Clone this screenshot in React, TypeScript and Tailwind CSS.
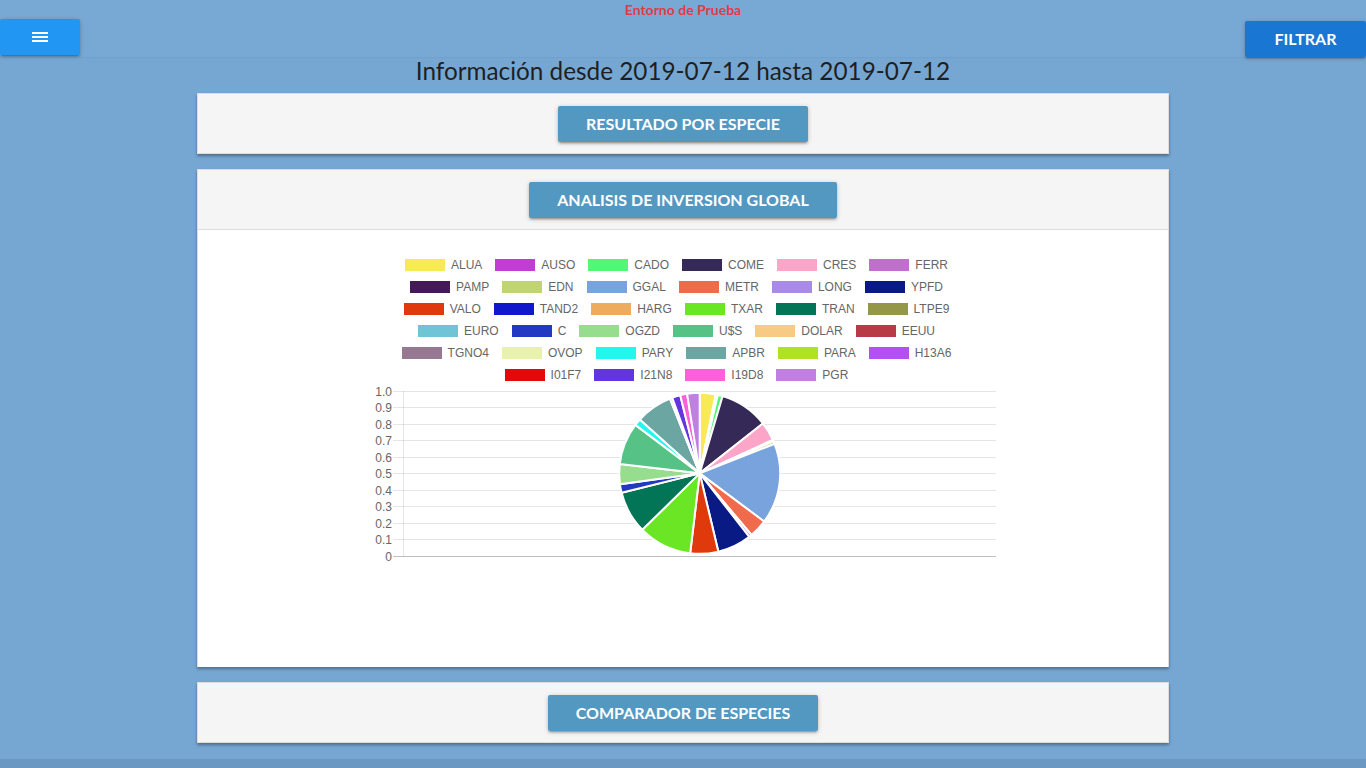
import React from "react";

type Item = { name: string; color: string; deg: number };

// degrees of the pie, clockwise from the top, in legend order
const items: Item[] = [
  { name: "ALUA", color: "#f7ea55", deg: 11.5 },
  { name: "AUSO", color: "#c53bd6", deg: 1.5 },
  { name: "CADO", color: "#52f774", deg: 3.5 },
  { name: "COME", color: "#352957", deg: 35.2 },
  { name: "CRES", color: "#fba6c9", deg: 13.8 },
  { name: "FERR", color: "#c070cc", deg: 0.5 },
  { name: "PAMP", color: "#431a57", deg: 0.5 },
  { name: "EDN", color: "#c0d474", deg: 2 },
  { name: "GGAL", color: "#78a3dc", deg: 58.3 },
  { name: "METR", color: "#ef6b4c", deg: 13.2 },
  { name: "LONG", color: "#a98ae6", deg: 2 },
  { name: "YPFD", color: "#0a1a85", deg: 24.6 },
  { name: "VALO", color: "#e03a0c", deg: 20.2 },
  { name: "TAND2", color: "#1018cc", deg: 0 },
  { name: "HARG", color: "#eeab5c", deg: 0 },
  { name: "TXAR", color: "#6ae624", deg: 38.7 },
  { name: "TRAN", color: "#017556", deg: 30.5 },
  { name: "LTPE9", color: "#959748", deg: 0 },
  { name: "EURO", color: "#6fc4d6", deg: 0 },
  { name: "C", color: "#2339c1", deg: 6.2 },
  { name: "OGZD", color: "#97dd8e", deg: 14.5 },
  { name: "U$S", color: "#56c286", deg: 30.3 },
  { name: "DOLAR", color: "#f8cb85", deg: 0 },
  { name: "EEUU", color: "#b73a47", deg: 0 },
  { name: "TGNO4", color: "#967892", deg: 0 },
  { name: "OVOP", color: "#e8f2ad", deg: 0 },
  { name: "PARY", color: "#22f6ee", deg: 5 },
  { name: "APBR", color: "#6ca6a2", deg: 26.3 },
  { name: "PARA", color: "#afe223", deg: 1.7 },
  { name: "H13A6", color: "#b44ff0", deg: 0 },
  { name: "I01F7", color: "#e5070c", deg: 0 },
  { name: "I21N8", color: "#6235e0", deg: 6 },
  { name: "I19D8", color: "#ff5fd8", deg: 5 },
  { name: "PGR", color: "#c080e0", deg: 9 },
];

const rows = [
  ["ALUA", "AUSO", "CADO", "COME", "CRES", "FERR"],
  ["PAMP", "EDN", "GGAL", "METR", "LONG", "YPFD"],
  ["VALO", "TAND2", "HARG", "TXAR", "TRAN", "LTPE9"],
  ["EURO", "C", "OGZD", "U$S", "DOLAR", "EEUU"],
  ["TGNO4", "OVOP", "PARY", "APBR", "PARA", "H13A6"],
  ["I01F7", "I21N8", "I19D8", "PGR"],
];

const byName = (n: string) => items.find((i) => i.name === n)!;

const Legend = () => (
  <div className="flex flex-col">
    {rows.map((row, r) => (
      <div key={r} className="h-[22px] flex items-center justify-center">
        {row.map((n) => (
          <div key={n} className="flex items-center mr-[13px]">
            <span className="block w-[40px] h-[12px]" style={{ background: byName(n).color }} />
            <span className="ml-[6px] text-[12px] leading-[14px] text-[#666]">{n}</span>
          </div>
        ))}
      </div>
    ))}
  </div>
);

const PieChart = () => {
  const top = 5;
  const step = 16.47;
  const bottom = top + step * 10;
  const cx = 329.7;
  const cy = (top + bottom) / 2;
  const r = 80.5;
  const pt = (a: number) => {
    const t = (a * Math.PI) / 180;
    return [cx + r * Math.sin(t), cy - r * Math.cos(t)];
  };
  let acc = 0;
  const slices = items
    .filter((i) => i.deg > 0)
    .map((i) => {
      const a0 = acc;
      acc += i.deg;
      const [x0, y0] = pt(a0);
      const [x1, y1] = pt(acc);
      const large = i.deg > 180 ? 1 : 0;
      return (
        <path
          key={i.name}
          d={`M${cx} ${cy} L${x0} ${y0} A${r} ${r} 0 ${large} 1 ${x1} ${y1} Z`}
          fill={i.color}
          stroke="#fff"
          strokeWidth={2}
          strokeLinejoin="round"
        />
      );
    });
  const labels = ["1.0", "0.9", "0.8", "0.7", "0.6", "0.5", "0.4", "0.3", "0.2", "0.1", "0"];
  return (
    <svg width="626" height="182" className="block mx-auto">
      {labels.map((l, i) => {
        const y = Math.round(top + i * step) + 0.5;
        return (
          <g key={l}>
            <line x1="23" x2="626" y1={y} y2={y} stroke={i === 10 ? "rgba(0,0,0,0.25)" : "rgba(0,0,0,0.1)"} />
            <text
              x="22"
              y={y + 4}
              textAnchor="end"
              fontSize="12"
              fill="#666"
              fontFamily="'Liberation Sans', Arial, sans-serif"
            >
              {l}
            </text>
          </g>
        );
      })}
      <line x1="33.5" x2="33.5" y1={top} y2={bottom + 1} stroke="rgba(0,0,0,0.1)" />
      {slices}
    </svg>
  );
};

const Btn = ({ label }: { label: string }) => (
  <button className="h-[36px] px-[28px] bg-[#5398c1] text-white text-[16px] font-bold uppercase rounded-[2px] shadow-[0_2px_2px_0_rgba(0,0,0,0.14),0_3px_1px_-2px_rgba(0,0,0,0.12),0_1px_5px_0_rgba(0,0,0,0.2)]">
    {label}
  </button>
);

const Card = ({ label, children }: { label: string; children?: React.ReactNode }) => (
  <div className="border-t border-x border-[#ddd] shadow-[0_2px_3px_rgba(0,0,0,0.35)]">
    <div className="bg-[#f5f5f5] pt-[12px] pb-[11px] flex justify-center border-b border-[#ddd]">
      <Btn label={label} />
    </div>
    {children}
  </div>
);

export default function App() {
  return (
    <div className="min-h-screen bg-[#76a7d3] font-['Lato',sans-serif] overflow-hidden">
      <header className="h-[57px] bg-[#78a9d5] grid grid-cols-[1fr_auto_1fr] items-start shadow-[0_1px_1px_rgba(0,0,0,0.04)]">
        <div className="justify-self-start mt-[19px]">
          <button className="w-[80px] h-[36px] bg-[#2196f3] rounded-[2px] flex items-center justify-center shadow-[0_2px_2px_0_rgba(0,0,0,0.14),0_3px_1px_-2px_rgba(0,0,0,0.12),0_1px_5px_0_rgba(0,0,0,0.2)]">
            <svg width="16" height="10" viewBox="0 0 16 10">
              <rect x="0" y="0" width="16" height="2" fill="#fff" />
              <rect x="0" y="4" width="16" height="2" fill="#fff" />
              <rect x="0" y="8" width="16" height="2" fill="#fff" />
            </svg>
          </button>
        </div>
        <div className="text-[14px] font-bold text-[#e53945] leading-[16px] pt-[2px]">Entorno de Prueba</div>
        <div className="justify-self-end mt-[21px]">
          <button className="w-[121px] h-[36px] bg-[#1976d2] text-white text-[16px] font-bold rounded-[2px] shadow-[0_2px_2px_0_rgba(0,0,0,0.14),0_3px_1px_-2px_rgba(0,0,0,0.12),0_1px_5px_0_rgba(0,0,0,0.2)]">
            FILTRAR
          </button>
        </div>
      </header>

      <h1 className="text-center text-[24.3px] leading-[28px] text-[#1f1f1f]">
        Información desde 2019-07-12 hasta 2019-07-12
      </h1>

      <main className="w-[972px] mx-auto mt-[8px] flex flex-col gap-[15px]">
        <Card label="Resultado por especie" />
        <Card label="Analisis de inversion global">
          <div className="bg-white h-[437px] pt-[24px] font-['Liberation_Sans',Arial,sans-serif]">
            <Legend />
            <PieChart />
          </div>
        </Card>
        <Card label="Comparador de especies" />
      </main>

      <footer className="mt-[16px] h-[60px] bg-[#6a98c2]" />
    </div>
  );
}
